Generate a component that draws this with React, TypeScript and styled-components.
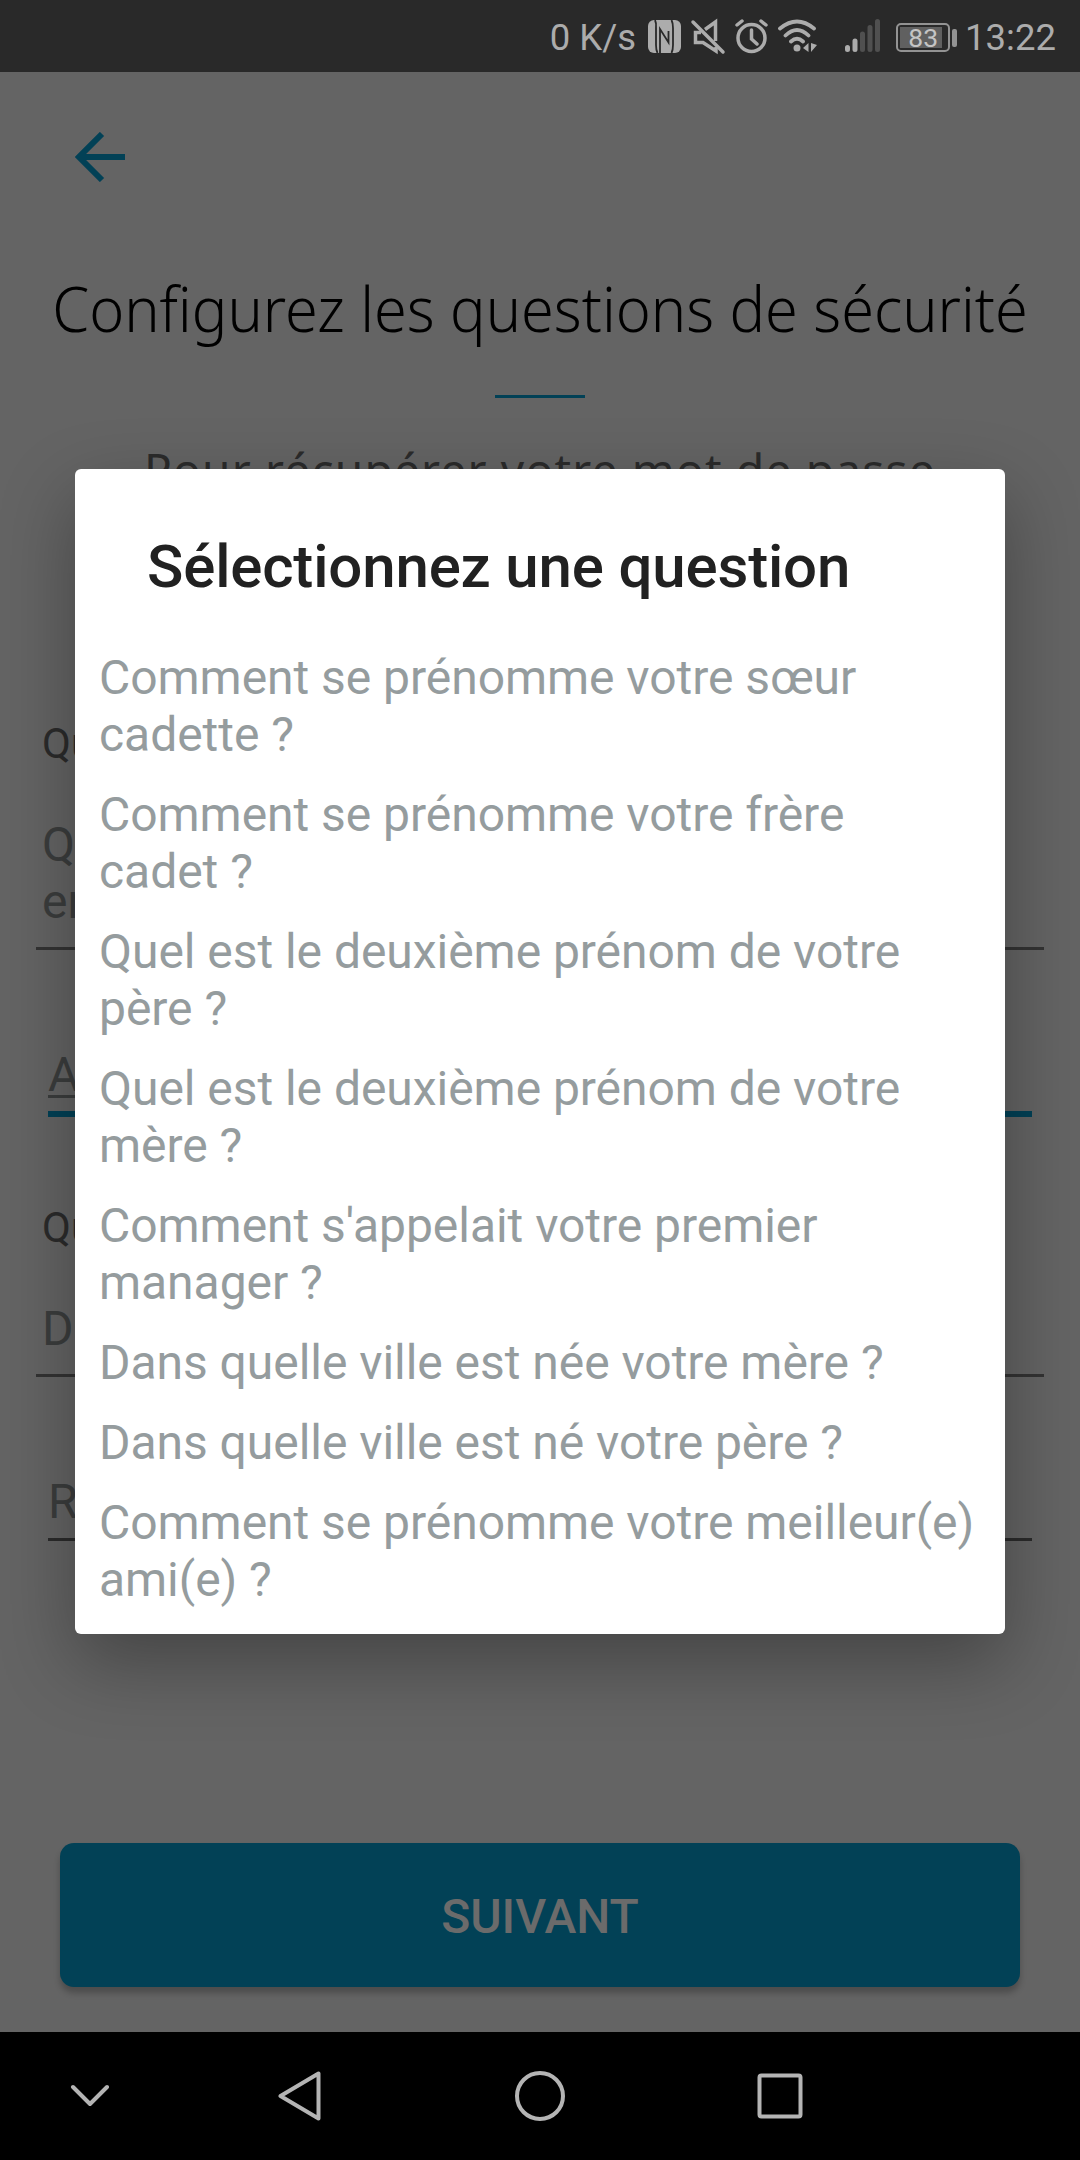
import React from 'react';
import styled, { createGlobalStyle } from 'styled-components';

const Global = createGlobalStyle`
  * { box-sizing: border-box; }
  body { margin: 0; background: #646464; font-family: Roboto, "Liberation Sans", sans-serif; }
`;

const Screen = styled.div`
  position: relative;
  width: 1080px;
  height: 2160px;
  display: flex;
  flex-direction: column;
  overflow: hidden;
  background: #646464;
`;

const StatusBar = styled.header`
  height: 72px;
  flex: none;
  display: flex;
  align-items: center;
  justify-content: flex-end;
  padding: 3px 24px 0 0;
  background: #292929;
  color: #acacac;
  font-size: 36.500px;
  line-height: 44px;
`;

const Speed = styled.span`
  margin-right: 11px;
`;

const StatusIcons = styled.svg`
  display: block;
  margin-top: -3px;
  margin-right: 14px;
`;

const Battery = styled.div`
  display: flex;
  align-items: center;
  gap: 2px;
  margin: 0 8px 0 0;
`;

const Cell = styled.div`
  width: 54px;
  height: 29px;
  padding: 2px;
  border: 2px solid #939393;
  border-radius: 5px;
`;

const Charge = styled.div`
  width: 42px;
  height: 21px;
  display: flex;
  align-items: center;
  justify-content: flex-end;
  padding-right: 4px;
  background: #606060;
  color: #c4c4c4;
  font-size: 26.500px;
  line-height: 21px;
`;

const BatteryTip = styled.div`
  width: 5px;
  height: 18px;
  border-radius: 2px;
  background: #939393;
`;

const Page = styled.main`
  flex: 1;
  display: flex;
  flex-direction: column;
  align-items: stretch;
`;

const BackIcon = styled.svg`
  display: block;
  width: 50px;
  height: 50px;
  margin: 60px 0 0 75px;
`;

const Title = styled.h1`
  margin: 81px 0 0;
  height: 90px;
  font-family: "Noto Sans", "Open Sans", sans-serif;
  font-weight: 300;
  font-size: 62px;
  line-height: 90px;
  color: #000;
  text-align: center;
  white-space: nowrap;
  transform: scaleX(0.958);
`;

const Rule = styled.div`
  width: 90px;
  height: 3px;
  margin: 42px auto 0;
  background: #024156;
`;

const Intro = styled.p`
  margin: 41px 0 0;
  height: 280px;
  font-family: "Noto Sans", "Open Sans", sans-serif;
  font-size: 46px;
  line-height: 60px;
  letter-spacing: 1.2px;
  color: #2b2b2b;
  text-align: center;
`;

const Label = styled.div<{ $top?: number }>`
  margin: ${p => p.$top ?? 0}px 0 0 42px;
  height: 50px;
  font-size: 42px;
  line-height: 50px;
  color: #2b2b2b;
`;

const Choice = styled.div<{ $height: number }>`
  height: ${p => p.$height}px;
  margin: 38px 36px 0;
  padding: 9px 6px 0;
  font-size: 48px;
  line-height: 57px;
  color: #3b3d3d;
  border-bottom: 3px solid #333;
`;

const Field = styled.div<{ $height: number; $focused?: boolean }>`
  height: ${p => p.$height}px;
  margin: 96px 48px 0;
  font-size: 48px;
  line-height: 57px;
  color: #3b3d3d;
  border-bottom: ${p => (p.$focused ? '6px solid #024156' : '3px solid #2b2b2b')};
`;

const Hint = styled.span`
  display: block;
  width: 50%;
  height: 52px;
  border-bottom: 3px solid #3b3d3d;
`;

const NextButton = styled.button`
  height: 144px;
  flex: none;
  margin: auto 60px 45px;
  border: 0;
  border-radius: 14px;
  background: #024156;
  box-shadow: 0 6px 6px rgba(0, 0, 0, 0.24);
  color: #6b6b6b;
  font-family: Roboto, sans-serif;
  font-size: 48px;
  font-weight: 500;
  padding: 3px 0 0;
`;

const NavBar = styled.nav`
  height: 128px;
  flex: none;
  background: #000;
`;

const Dialog = styled.section`
  position: absolute;
  left: 75px;
  top: 469px;
  width: 930px;
  height: 1165px;
  padding: 62px 24px 0;
  border-radius: 6px;
  background: #fff;
  box-shadow: 0 28px 76px rgba(0, 0, 0, 0.32);
`;

const DialogTitle = styled.h2`
  margin: 0 0 46px 48px;
  height: 72px;
  font-size: 60px;
  font-weight: 500;
  line-height: 72px;
  letter-spacing: -0.17px;
  color: #212121;
`;

const Questions = styled.ul`
  display: flex;
  flex-direction: column;
  gap: 23px;
  margin: 0;
  padding: 0;
  list-style: none;
`;

const Question = styled.li`
  font-size: 48px;
  line-height: 57px;
  letter-spacing: -0.04px;
  color: #959c9e;
`;

const QUESTIONS = [
  ['Comment se prénomme votre sœur', 'cadette ?'],
  ['Comment se prénomme votre frère', 'cadet ?'],
  ['Quel est le deuxième prénom de votre', 'père ?'],
  ['Quel est le deuxième prénom de votre', 'mère ?'],
  ["Comment s'appelait votre premier", 'manager ?'],
  ['Dans quelle ville est née votre mère ?'],
  ['Dans quelle ville est né votre père ?'],
  ['Comment se prénomme votre meilleur(e)', 'ami(e) ?'],
];

export default function App() {
  return (
    <>
      <Global />
      <Screen>
        <StatusBar>
          <Speed>0 K/s</Speed>
          <StatusIcons width="235" height="40" viewBox="647 16 235 40" fill="none" stroke="#acacac" strokeWidth="3.5">
            <rect x="648" y="20" width="33" height="33" rx="6" fill="#acacac" stroke="none" />
            <path d="M655 20q1.500 3 1 8v17q0 5 1.500 8M671.500 20q1.500 3 1.500 8v17q0 5-1.500 8" stroke="#292929" strokeWidth="1.800" />
            <path d="M660 53V29l8.500 13.500V31" stroke="#292929" strokeWidth="1.800" />
            <path d="M693 22l30 30" strokeLinecap="round" />
            <path d="M705 29.500l10.500-7.500v19M701 32.500h-5.500v10h7.500l13 8.500v-4" />
            <circle cx="751.500" cy="38" r="13.500" />
            <path d="M751.500 30v9l5.500 5M737 25l5-4M766 25l-5-4" strokeLinecap="round" />
            <path d="M780 28.500q17-14 34 0M785.500 35.500q11.500-11 23 0M791 41.500q6-5.500 12 0" strokeLinecap="round" strokeWidth="3.800" />
            <circle cx="797" cy="48" r="3.500" fill="#acacac" stroke="none" />
            <path d="M803 48l5.500-5v9zM811 43l6 2-6 7z" fill="#acacac" stroke="none" />
            <path d="M847.500 47.500v2M855 41v8.500" strokeWidth="5" strokeLinecap="round" />
            <path d="M862.500 34v15.500M870 27.500v22M877.500 21.500v28" strokeWidth="5" stroke="#505050" strokeLinecap="round" />
          </StatusIcons>
          <Battery>
            <Cell><Charge>83</Charge></Cell>
            <BatteryTip />
          </Battery>
          <span>13:22</span>
        </StatusBar>
        <Page>
          <BackIcon viewBox="0 0 50 50" fill="none" stroke="#024156" strokeWidth="6">
            <path d="M50 25H5M27 2L4 25l23 23" />
          </BackIcon>
          <Title>Configurez les questions de sécurité</Title>
          <Rule />
          <Intro>Pour récupérer votre mot de passe</Intro>
          <Label>Qu</Label>
          <Choice $height={143}>Q<br />en</Choice>
          <Field $height={71} $focused><Hint>A</Hint></Field>
          <Label $top={86}>Qu</Label>
          <Choice $height={86}>D</Choice>
          <Field $height={68}>R</Field>
          <NextButton>SUIVANT</NextButton>
        </Page>
        <NavBar>
          <svg width="1080" height="128" viewBox="0 2032 1080 128" fill="none" stroke="#b4b4b4" strokeWidth="4">
            <path d="M73 2087l17 17 17-17M318.500 2073.500v45L280.500 2096z" strokeLinejoin="round" strokeLinecap="round" />
            <circle cx="540" cy="2096" r="23" />
            <rect x="759.500" y="2075.500" width="41" height="41" rx="2" />
          </svg>
        </NavBar>
        <Dialog>
          <DialogTitle>Sélectionnez une question</DialogTitle>
          <Questions>
            {QUESTIONS.map(([first, rest]) => (
              <Question key={first + rest}>
                {first}
                {rest && <><br />{rest}</>}
              </Question>
            ))}
          </Questions>
        </Dialog>
      </Screen>
    </>
  );
}
